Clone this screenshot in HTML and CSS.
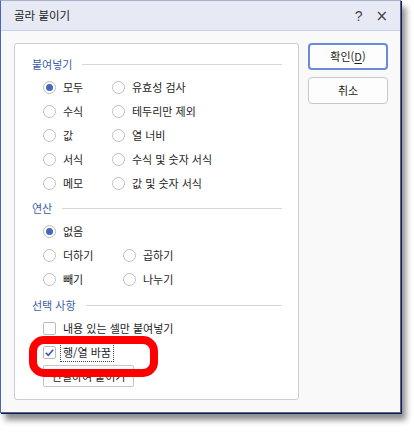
FILE: index.html
```html
<!DOCTYPE html>
<html lang="ko">
<head>
<meta charset="utf-8">
<title>골라 붙이기</title>
<link rel="stylesheet" href="styles.css">
</head>
<body>
<div class="window">
  <div class="titlebar">
    <span class="title">골라 붙이기</span>
    <span class="tb-btns"><span class="tb-help">?</span><span class="tb-close">×</span></span>
  </div>
  <div class="main">
    <div class="group">
      <div class="section-title">붙여넣기</div>
      <div class="grid paste-grid">
        <div class="opt"><span class="radio on"></span><span>모두</span></div>
        <div class="opt"><span class="radio"></span><span>유효성 검사</span></div>
        <div class="opt"><span class="radio"></span><span>수식</span></div>
        <div class="opt"><span class="radio"></span><span>테두리만 제외</span></div>
        <div class="opt"><span class="radio"></span><span>값</span></div>
        <div class="opt"><span class="radio"></span><span>열 너비</span></div>
        <div class="opt"><span class="radio"></span><span>서식</span></div>
        <div class="opt"><span class="radio"></span><span>수식 및 숫자 서식</span></div>
        <div class="opt"><span class="radio"></span><span>메모</span></div>
        <div class="opt"><span class="radio"></span><span>값 및 숫자 서식</span></div>
      </div>
      <div class="section-title sec2">연산</div>
      <div class="grid op-grid">
        <div class="opt"><span class="radio on"></span><span>없음</span></div>
        <div class="opt"></div>
        <div class="opt"><span class="radio"></span><span>더하기</span></div>
        <div class="opt"><span class="radio"></span><span>곱하기</span></div>
        <div class="opt"><span class="radio"></span><span>빼기</span></div>
        <div class="opt"><span class="radio"></span><span>나누기</span></div>
      </div>
      <div class="section-title sec3">선택 사항</div>
      <div class="checks">
        <div class="opt"><span class="check"></span><span>내용 있는 셀만 붙여넣기</span></div>
        <div class="opt"><span class="check on"><svg width="13" height="13" viewBox="0 0 13 13"><polyline points="2.8,6.8 5.3,9.3 10.2,3.8" fill="none" stroke="#3f5fae" stroke-width="1.7"/></svg></span><span class="focus">행/열 바꿈</span></div>
        <div class="link-btn">연결하여 붙이기</div>
      </div>
    </div>
    <div class="buttons">
      <div class="btn default">확인(<u>D</u>)</div>
      <div class="btn">취소</div>
    </div>
  </div>
  <div class="annot"></div>
</div>
</body>
</html>
```

FILE: styles.css
```css
html, body {
  margin: 0;
  padding: 0;
  background: #ffffff;
}
body {
  width: 414px;
  height: 442px;
  overflow: hidden;
  font-family: "Noto Sans CJK KR", "Noto Sans", sans-serif;
  font-size: 11px;
  color: #1e1e1e;
}
.window {
  position: relative;
  box-sizing: border-box;
  width: 401px;
  height: 413px;
  background: #f9f9f9;
  border: 1px solid #4a64b6;
  border-top-color: #a9b1c9;
  box-shadow: 1px 1px 0 #1c1f2c, 5px 7px 6px rgba(0, 0, 0, 0.45);
}
.titlebar {
  height: 29px;
  background: #e7eaf5;
  border-bottom: 1px solid #c6cfec;
  display: flex;
  align-items: center;
  justify-content: space-between;
  padding: 0 12px 0 13px;
}
.title {
  font-size: 11.5px;
  color: #222;
  line-height: 29px;
}
.tb-btns {
  display: flex;
  gap: 13px;
  align-items: center;
  color: #444;
}
.tb-help {
  font-family: "Liberation Sans", sans-serif;
  font-size: 14px;
}
.tb-close {
  font-family: "DejaVu Sans", sans-serif;
  font-size: 15px;
}
.main {
  display: flex;
  padding: 12px 0 0 13px;
  gap: 9px;
  align-items: flex-start;
}
.group {
  box-sizing: border-box;
  width: 285px;
  height: 357px;
  background: #ffffff;
  border: 1px solid #cdcdcd;
  border-radius: 3px;
  padding: 9px 16px 0 17px;
}
.section-title {
  display: flex;
  align-items: center;
  height: 22px;
  line-height: 22px;
  color: #3d5ea6;
}
.section-title::after {
  content: "";
  flex: 1;
  height: 1px;
  background: #d6d6d6;
  margin-left: 10px;
}
.sec2 { margin-top: 2px; }
.sec3 { margin-top: 3px; }
.grid {
  display: grid;
  padding-left: 11px;
}
.paste-grid { grid-template-columns: 69px auto; }
.op-grid { grid-template-columns: 80px auto; }
.opt {
  display: flex;
  align-items: center;
  gap: 7px;
  height: 24px;
  white-space: nowrap;
}
.radio {
  position: relative;
  box-sizing: border-box;
  width: 13px;
  height: 13px;
  border: 1px solid #bdbdbd;
  border-radius: 50%;
  background: #fff;
  flex: none;
}
.radio.on::after {
  content: "";
  position: absolute;
  left: 2px;
  top: 2px;
  width: 7px;
  height: 7px;
  border-radius: 50%;
  background: #4568be;
}
.checks {
  padding-left: 11px;
}
.check {
  box-sizing: border-box;
  width: 13px;
  height: 13px;
  border: 1px solid #bcbcbc;
  border-radius: 2px;
  background: #fff;
  flex: none;
  display: flex;
}
.check svg {
  margin: -1px;
}
.opt .focus {
  margin-left: -3px;
  padding: 0 2px;
  line-height: 17px;
  border: 1px dotted #444;
}
.link-btn {
  box-sizing: border-box;
  width: 91px;
  height: 22px;
  margin-top: 1px;
  border: 1px solid #c6c6c6;
  border-radius: 2px;
  background: #fdfdfd;
  text-align: center;
  line-height: 20px;
}
.buttons {
  display: flex;
  flex-direction: column;
  gap: 7px;
}
.btn {
  box-sizing: border-box;
  width: 80px;
  height: 27px;
  border: 1px solid #c8c8c8;
  border-radius: 4px;
  background: #fdfdfd;
  text-align: center;
  line-height: 25px;
  color: #222;
}
.btn.default {
  border: 2px solid #6b8ad8;
  line-height: 23px;
}
.btn u {
  text-underline-offset: 2px;
}
.annot {
  position: absolute;
  left: 28px;
  top: 335px;
  width: 129px;
  height: 41px;
  box-sizing: border-box;
  border: 8px solid #fe0000;
  border-radius: 15px;
}
```
